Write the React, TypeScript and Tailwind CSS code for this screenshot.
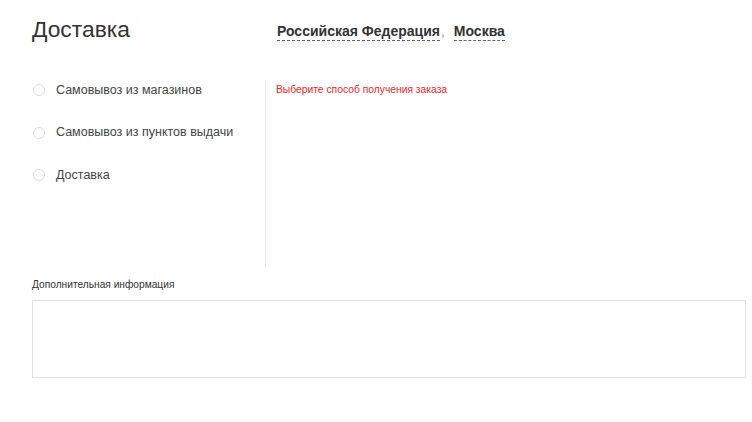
import React from "react";

const font = { fontFamily: '"Liberation Sans", Arial, sans-serif' };

function Radio({ label }: { label: string }) {
  return (
    <label className="flex h-[17px] items-center gap-[11px]">
      <span className="ml-[1px] h-[12px] w-[12px] rounded-full border border-[#dcdcdc] bg-white" />
      <span className="text-[12.5px] text-[#444]">{label}</span>
    </label>
  );
}

export default function App() {
  return (
    <div style={font} className="min-h-[422px] w-[752px] bg-white px-8 text-[#333]">
      <div className="flex items-end pt-[14px]">
        <h1 className="w-[245px] pt-[1px] text-[22.8px] leading-[29px] text-[#333]">Доставка</h1>
        <div className="flex items-baseline pb-[2px] text-[14px] font-bold text-[#333]">
          <span className="border-b border-dashed border-[#666] leading-[17px]">Российская Федерация</span>
          <span className="ml-[1px] font-normal text-[#999]">,</span>
          <span className="ml-[9px] border-b border-dashed border-[#666] leading-[17px]">Москва</span>
        </div>
      </div>
      <div className="mt-[36px] flex">
        <div className="flex h-[187px] w-[234px] flex-col gap-[25.5px] border-r border-[#ececec] pt-[1.5px]">
          <Radio label="Самовывоз из магазинов" />
          <Radio label="Самовывоз из пунктов выдачи" />
          <Radio label="Доставка" />
        </div>
        <div className="pl-[10px] pt-[4px] text-[10.3px] leading-[12px] text-[#f0242b]">
          Выберите способ получения заказа
        </div>
      </div>
      <div className="mt-[12px] text-[10.2px] leading-[12px] text-[#333]">Дополнительная информация</div>
      <textarea className="mt-[9px] block h-[78px] w-[714px] resize-none border border-[#e2e2e2] outline-none" />
    </div>
  );
}
